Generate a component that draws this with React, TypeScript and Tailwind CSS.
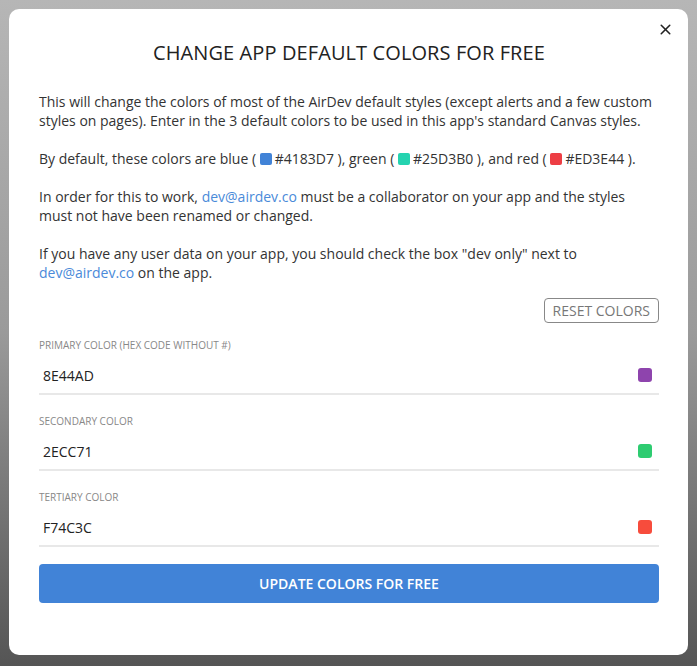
import React from 'react';
import { X } from 'lucide-react';

const fields = [
  { label: 'PRIMARY COLOR (HEX CODE WITHOUT #)', value: '8E44AD', swatch: 'bg-[#8e44ad]' },
  { label: 'SECONDARY COLOR', value: '2ECC71', swatch: 'bg-[#2ecc71]' },
  { label: 'TERTIARY COLOR', value: 'F74C3C', swatch: 'bg-[#f74c3c]' },
];

const Chip: React.FC<{ color: string }> = ({ color }) => (
  <span className={`inline-block w-[12px] h-[12px] rounded-[2px] align-[-1px] mr-[3px] ${color}`} />
);

const App: React.FC = () => {
  return (
    <div
      className="w-[697px] h-[666px] overflow-hidden p-[9px] bg-gradient-to-b from-[#b6b6b6] via-[#9a9a9a] to-[#555555]"
      style={{ fontFamily: '"Open Sans", "Liberation Sans", sans-serif' }}
    >
      <div className="relative w-[679px] h-[646px] bg-white rounded-[10px] pl-[30px] pr-[29px] pt-[30px] text-[#333]">
        {/* close */}
        <button className="absolute right-[14px] top-[12px] text-[#222]">
          <X size={17} strokeWidth={2.2} />
        </button>

        <h2 className="text-center text-[20px] leading-[28px] text-[#222] tracking-[0.1px]">
          CHANGE APP DEFAULT COLORS FOR FREE
        </h2>

        <div className="mt-[25px] text-[14px] leading-[19px] flex flex-col gap-[19px]">
          <p>
            This will change the colors of most of the AirDev default styles (except alerts and a few custom
            styles on pages). Enter in the 3 default colors to be used in this app's standard Canvas styles.
          </p>
          <p>
            By default, these colors are blue ( <Chip color="bg-[#4183d7]" />#4183D7 ), green ({' '}
            <Chip color="bg-[#25d3b0]" />#25D3B0 ), and red ( <Chip color="bg-[#ed3e44]" />#ED3E44 ).
          </p>
          <p>
            In order for this to work, <span className="text-[#4a8ad9]">dev@airdev.co</span> must be a collaborator
            on your app and the styles must not have been renamed or changed.
          </p>
          <p>
            If you have any user data on your app, you should check the box "dev only" next to{' '}
            <span className="text-[#4a8ad9]">dev@airdev.co</span> on the app.
          </p>
        </div>

        <div className="flex justify-end mt-[16px]">
          <button className="h-[25px] px-[8px] border border-[#888] rounded-[4px] text-[14px] leading-[23px] text-[#777]">
            RESET COLORS
          </button>
        </div>

        <div className="mt-[15px] flex flex-col gap-[19px]">
          {fields.map((f) => (
            <div key={f.value}>
              <div className="text-[10px] leading-[14px] text-[#888]">{f.label}</div>
              <div className="mt-[5px] h-[38px] border-b-2 border-[#e8e8e8] flex items-center justify-between pl-[4px] pr-[7px]">
                <span className="text-[14px] text-[#222]">{f.value}</span>
                <span className={`w-[14px] h-[14px] rounded-[3px] ${f.swatch}`} />
              </div>
            </div>
          ))}
        </div>

        <button className="mt-[17px] w-full h-[39px] rounded-[4px] bg-[#4183d7] text-white text-[14px] font-semibold">
          UPDATE COLORS FOR FREE
        </button>
      </div>
    </div>
  );
};

export default App;
